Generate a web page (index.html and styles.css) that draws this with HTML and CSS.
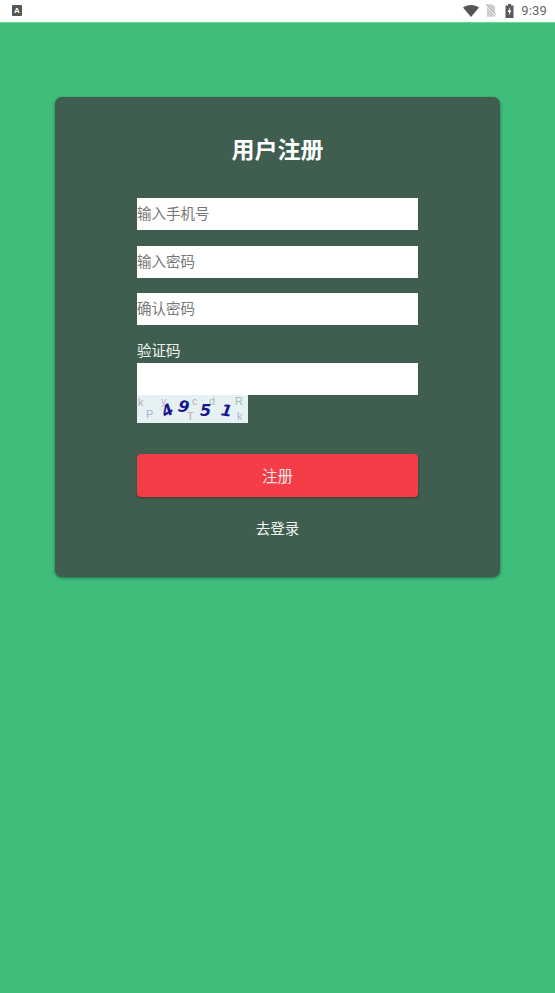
FILE: index.html
```html
<!DOCTYPE html>
<html lang="zh">
<head>
<meta charset="utf-8">
<title>用户注册</title>
<link rel="stylesheet" href="styles.css">
</head>
<body>
<header class="status">
  <span class="app-badge">A</span>
  <span class="status-right">
    <svg class="wifi" viewBox="0 0 16 12"><path d="M0 2.600C2.200.9 5 0 8 0s5.800.9 8 2.600L8 12z"/></svg>
    <svg class="sim" viewBox="0 0 11 14"><path d="M1 0h6l3 3v11H1z" fill="#cfcfcf"/><path d="M0 1l11 12" stroke="#fff" stroke-width="1.200"/><path d="M0 0l11 12" stroke="#8f8f8f" stroke-width=".8"/></svg>
    <svg class="battery" viewBox="0 0 8 14"><path d="M2.500 0h3v1.500H8V14H0V1.500h2.500z" fill="#595959"/><path d="M4.800 3L2 8h1.700l-.5 3.500L6 6.500H4.300z" fill="#fff"/></svg>
    <span class="time">9:39</span>
  </span>
</header>
<main class="page">
  <section class="card">
    <h1 class="title">用户注册</h1>
    <form class="form">
      <input class="field" type="text" placeholder="输入手机号">
      <input class="field" type="password" placeholder="输入密码">
      <input class="field" type="password" placeholder="确认密码">
      <div class="captcha-group">
        <label class="captcha-label">验证码</label>
        <input class="field" type="text">
        <div class="captcha">
          <span class="noise n1">k</span><span class="noise n2">P</span><span class="noise n3">y</span><span class="noise n4">c</span><span class="noise n5">T</span><span class="noise n6">d</span><span class="noise n7">R</span><span class="noise n8">k</span>
          <span class="digit d1">4</span><span class="digit d2">9</span><span class="digit d3">5</span><span class="digit d4">1</span>
        </div>
      </div>
      <button class="submit" type="button">注册</button>
      <a class="login-link">去登录</a>
    </form>
  </section>
</main>
</body>
</html>
```

FILE: styles.css
```css
* { box-sizing: border-box; }
html, body { margin: 0; height: 100%; }
body {
  width: 555px;
  height: 993px;
  overflow: hidden;
  background: #3ebd7b;
  font-family: "Noto Sans CJK SC", "Liberation Sans", sans-serif;
  display: flex;
  flex-direction: column;
}
.status {
  height: 23px;
  flex: none;
  background: #fff;
  border-bottom: 1px solid #63dd8c;
  display: flex;
  align-items: center;
  justify-content: space-between;
  padding: 0 8px 1px 12px;
}
.app-badge {
  width: 10px;
  height: 11px;
  background: #555;
  color: #fff;
  border-radius: 1px;
  font: bold 8px/11px "Liberation Sans", sans-serif;
  text-align: center;
}
.status-right { display: flex; align-items: center; }
.wifi { width: 16px; height: 12px; fill: #555; margin-right: 7px; }
.sim { width: 10px; height: 13px; margin-right: 9px; }
.battery { width: 9px; height: 14px; margin-right: 7px; }
.time { font: 13px/16px Roboto, "Liberation Sans", sans-serif; color: #666; letter-spacing: .2px; }
.page { flex: 1; padding: 74px 55.500px 0 55px; }
.card {
  height: 480px;
  background: #405e4f;
  border-radius: 7px;
  box-shadow: 0 1px 3px rgba(20, 70, 50, .7);
  padding: 34px 81.500px 0 82px;
}
.title {
  margin: 0;
  font-size: 23px;
  line-height: 34px;
  font-weight: 700;
  color: #fff;
  text-align: center;
}
.form { display: flex; flex-direction: column; margin-top: 33px; }
.field {
  display: block;
  width: 281px;
  height: 32px;
  margin: 0 0 15.500px;
  padding: 0 0 3px;
  border: 0;
  border-radius: 0;
  outline: 0;
  background: #fff;
  font: 14.500px "Noto Sans CJK SC", sans-serif;
}
.field::placeholder { color: #777; opacity: 1; }
.captcha-group { display: flex; flex-direction: column; }
.captcha-group .field { margin: 0; }
.captcha-label { color: #f2f5f3; font-size: 14.500px; line-height: 22px; margin-top: -2px; margin-bottom: 2px; height: 22px; }
.captcha {
  position: relative;
  width: 111px;
  height: 28px;
  overflow: hidden;
  background: #e6f1f4;
}
.noise { position: absolute; font: 11px/13px "Liberation Sans", sans-serif; color: #a9bdb5; }
.n1 { left: 1px; top: 1px; color: #b7a89c; }
.n2 { left: 9px; top: 13px; color: #9fb4d6; }
.n3 { left: 24px; top: 0; color: #c7b4c4; }
.n4 { left: 55px; top: 0; color: #c4a9b0; }
.n5 { left: 50px; top: 15px; color: #c7a4b4; }
.n6 { left: 72px; top: 0; color: #a9c4a0; }
.n7 { left: 98px; top: 0; color: #a5c0a5; }
.n8 { left: 100px; top: 15px; color: #a9b3d6; }
.digit {
  position: absolute;
  font: italic 700 16px/20px "DejaVu Sans", sans-serif;
  color: #17178f;
}
.d1 { left: 25px; top: 6px; transform: rotate(-30deg); }
.d2 { left: 41px; top: 2px; transform: rotate(10deg); }
.d3 { left: 63px; top: 6px; }
.d4 { left: 84px; top: 6px; transform: rotate(8deg); }
.submit {
  width: 281px;
  height: 43px;
  margin-top: 31.500px;
  padding: 0 0 2px;
  border: 0;
  border-radius: 4px;
  background: #f43d47;
  box-shadow: 0 1px 2px rgba(60, 20, 20, .5);
  color: #f5e6e6;
  font: 15.500px "Noto Sans CJK SC", sans-serif;
}
.login-link {
  margin-top: 19.500px;
  color: #f4f6f5;
  font-size: 14.500px;
  line-height: 22px;
  text-align: center;
}
```
